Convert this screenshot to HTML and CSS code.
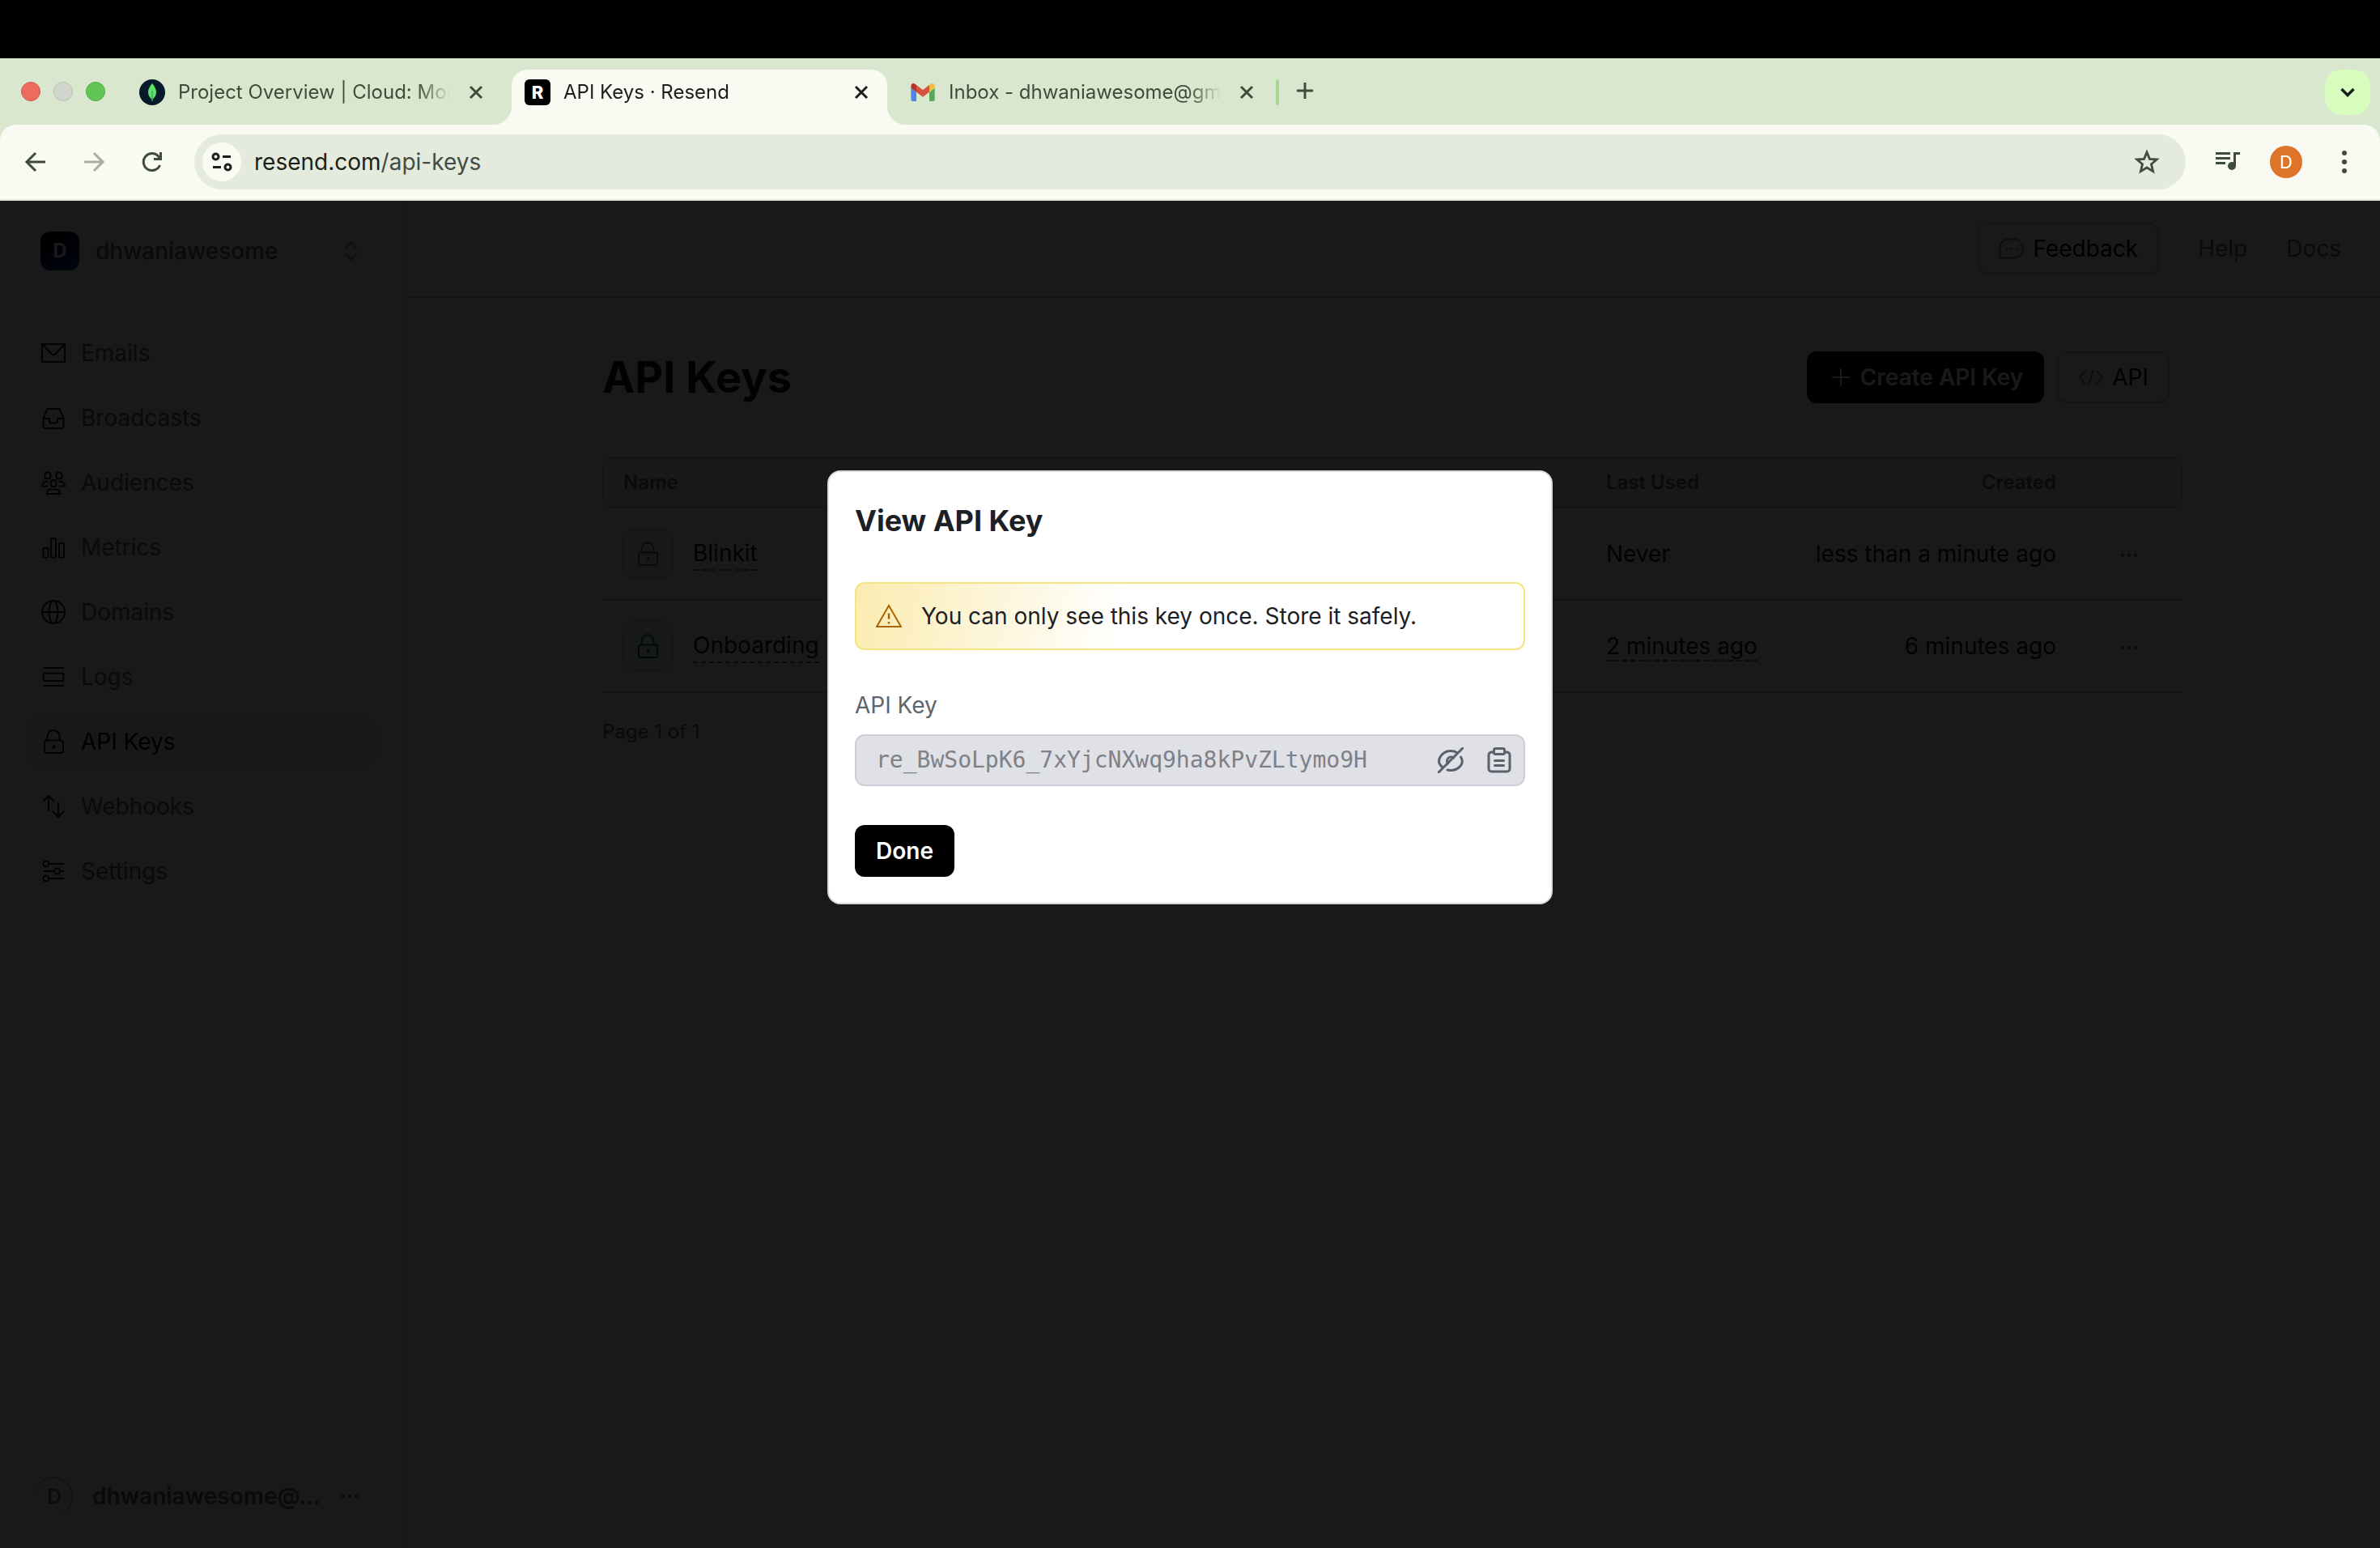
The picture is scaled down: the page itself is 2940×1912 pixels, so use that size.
FILE: index.html
```html
<!DOCTYPE html>
<html lang="en">
<head>
<meta charset="utf-8">
<title>API Keys · Resend</title>
<link rel="stylesheet" href="styles.css">
</head>
<body>
<svg class="sprite" aria-hidden="true">
  <symbol id="i-close" viewBox="0 0 32 32"><path d="M9 9l14 14M23 9L9 23" stroke-width="3"/></symbol>
  <symbol id="i-more" viewBox="0 0 32 32"><g fill="currentColor" stroke="none"><circle cx="8" cy="16" r="2"/><circle cx="16" cy="16" r="2"/><circle cx="24" cy="16" r="2"/></g></symbol>
  <symbol id="i-lock" viewBox="0 0 32 32"><path d="M8.500 14V9.500a7.500 7.500 0 0 1 15 0V14"/><rect x="5" y="14.500" width="23" height="15.500" rx="2.500"/><path d="M16.500 20.500v4" stroke-width="3"/></symbol>
</svg>

<div class="notch"></div>

<header class="browser">
  <div class="tabstrip">
    <div class="lights"><span class="light red"></span><span class="light grey"></span><span class="light green"></span></div>
    <div class="tabs">
      <div class="tab">
        <svg class="favicon" viewBox="0 0 32 32"><circle cx="16" cy="16" r="16" fill="#061a2b"/><path d="M16 5c3.500 4 5 7.500 5 11 0 4-2 6.500-4.500 8.500V27h-1v-2.500C13 22.500 11 20 11 16c0-3.500 1.500-7 5-11z" fill="#5fe06b"/><path d="M16 14v12" stroke="#1c9a4f" stroke-width="1"/></svg>
        <span class="tab-title">Project Overview | Cloud: Mon</span>
        <button class="tab-close" aria-label="Close tab"><svg class="icon"><use href="#i-close"/></svg></button>
      </div>
      <div class="tab active">
        <span class="favicon resend">R</span>
        <span class="tab-title">API Keys · Resend</span>
        <button class="tab-close" aria-label="Close tab"><svg class="icon"><use href="#i-close"/></svg></button>
      </div>
      <div class="tab">
        <svg class="favicon" viewBox="48 27 96 96"><path fill="#4f86ec" d="M58 108h14V74L52 59v43c0 3.320 2.690 6 6 6"/><path fill="#58a55c" d="M120 108h14c3.320 0 6-2.690 6-6V59l-20 15"/><path fill="#f2be42" d="M120 48v26l20-15v-8c0-7.420-8.470-11.650-14.400-7.200"/><path fill="#d95140" d="M72 74V48l24 18 24-18v26L96 92"/><path fill="#b63529" d="M52 51v8l20 15V48l-5.600-4.200c-5.940-4.450-14.400-.220-14.400 7.200"/></svg>
        <span class="tab-title">Inbox - dhwaniawesome@gma</span>
        <button class="tab-close" aria-label="Close tab"><svg class="icon"><use href="#i-close"/></svg></button>
      </div>
    </div>
    <span class="tab-divider"></span>
    <button class="new-tab" aria-label="New tab"><svg class="icon" viewBox="0 0 32 32"><path d="M16 6v20M6 16h20" stroke-width="3"/></svg></button>
    <button class="tab-search" aria-label="Search tabs"><svg class="icon" viewBox="0 0 32 32"><path d="M8.500 12l7.500 7.500 7.500-7.500" stroke-width="3.500"/></svg></button>
  </div>
  <div class="toolbar">
    <button class="tool" aria-label="Back"><svg class="icon" viewBox="0 0 32 32"><path d="M28 16H6M16 5L5 16l11 11" stroke-width="3"/></svg></button>
    <button class="tool off" aria-label="Forward"><svg class="icon" viewBox="0 0 32 32"><path d="M4 16h22M16 5l11 11-11 11" stroke-width="3"/></svg></button>
    <button class="tool reload" aria-label="Reload"><svg class="icon" viewBox="0 0 32 32"><path d="M25.500 20a10.500 10.500 0 1 1-1.500-10.500l2 2M26.500 4v8.500h-8.500" stroke-width="3"/></svg></button>
    <div class="omnibox">
      <button class="site-info" aria-label="Site information"><svg class="icon" viewBox="0 0 32 32"><g stroke-width="3"><circle cx="8.500" cy="9.500" r="3.500"/><path d="M17 9.500h10M5 22.500h10"/><circle cx="23.500" cy="22.500" r="3.500"/></g></svg></button>
      <div class="address"><label for="url">resend.com</label><input id="url" type="text" value="/api-keys"></div>
      <button class="tool star" aria-label="Bookmark"><svg class="icon" viewBox="0 0 32 32"><path d="M16 4l3.400 8.300 8.900.700-6.800 5.800 2.100 8.800L16 23l-7.600 4.600 2.100-8.800-6.800-5.800 8.900-.700z" stroke-width="2.800" stroke-linejoin="miter"/></svg></button>
    </div>
    <button class="tool media" aria-label="Media"><svg class="icon" viewBox="0 0 32 32"><path d="M1 5.500h18M1 11.500h18M1 17.500h12M24.500 21V5.500H31" stroke-width="3"/><circle cx="21" cy="21" r="5" fill="currentColor" stroke="none"/></svg></button>
    <button class="profile" aria-label="Profile">D</button>
    <button class="tool" aria-label="Menu"><svg class="icon" viewBox="0 0 32 32"><g fill="currentColor" stroke="none"><circle cx="16" cy="5" r="3"/><circle cx="16" cy="16" r="3"/><circle cx="16" cy="27" r="3"/></g></svg></button>
  </div>
</header>

<div class="page">
  <aside class="sidebar">
    <button class="team">
      <span class="team-logo">D</span><span class="team-name">dhwaniawesome</span>
      <svg class="icon muted" viewBox="0 0 32 32"><path d="M9 12.500l7-7 7 7M9 19.500l7 7 7-7"/></svg>
    </button>
    <nav class="nav">
      <a href="#emails"><svg class="icon" viewBox="0 0 32 32"><rect x="2" y="5" width="28" height="22"/><path d="M3 6l10.500 11c1.500 1.500 3.500 1.500 5 0L29 6"/></svg>Emails</a>
      <a href="#broadcasts"><svg class="icon" viewBox="0 0 32 32"><path d="M8.500 5h15L28.500 17v10a2 2 0 0 1-2 2h-21a2 2 0 0 1-2-2V17zM3.500 17H11v2.500a3 3 0 0 0 3 3h4a3 3 0 0 0 3-3V17h7.500"/></svg>Broadcasts</a>
      <a href="#audiences"><svg class="icon" viewBox="0 0 32 32"><rect x="5.500" y="3.500" width="7" height="8" rx="3"/><rect x="19.500" y="3.500" width="7" height="8" rx="3"/><rect x="12.500" y="13" width="7" height="8" rx="3"/><path d="M9.500 15H7c-3 0-5 2.500-5 5.500h7.500M22.500 15H25c3 0 5 2.500 5 5.500h-7.500M8 30c0-3 1.500-5.500 4-5.500h8c2.500 0 4 2.500 4 5.500z"/></svg>Audiences</a>
      <a href="#metrics"><svg class="icon" viewBox="0 0 32 32"><rect x="3.500" y="17" width="6" height="11.500" rx="1"/><rect x="13" y="5" width="6" height="23.500" rx="1"/><rect x="23" y="11" width="6" height="17.500" rx="1"/></svg>Metrics</a>
      <a href="#domains"><svg class="icon" viewBox="0 0 32 32"><circle cx="16" cy="16" r="14"/><ellipse cx="16" cy="16" rx="5.500" ry="14"/><path d="M2 16h28"/></svg>Domains</a>
      <a href="#logs"><svg class="icon" viewBox="0 0 32 32"><path d="M4 5h25M4 27h25"/><rect x="3.500" y="11.500" width="25" height="9.500" rx="2"/></svg>Logs</a>
      <a href="#api-keys" class="current"><svg class="icon"><use href="#i-lock"/></svg>API Keys</a>
      <a href="#webhooks"><svg class="icon" viewBox="0 0 32 32"><path d="M10 21.500V3M3 10l7-7 7 7M22 11v18M15 22l7 7 7-7"/></svg>Webhooks</a>
      <a href="#settings"><svg class="icon" viewBox="0 0 32 32"><circle cx="7" cy="7" r="3.500"/><circle cx="20.500" cy="16" r="3.500"/><circle cx="7" cy="25" r="3.500"/><path d="M11 7h18M4 16h12.500M24.500 16H29M11 25h18"/></svg>Settings</a>
    </nav>
    <button class="account">
      <span class="account-avatar">D</span><span class="account-name">dhwaniawesome@...</span>
      <svg class="icon"><use href="#i-more"/></svg>
    </button>
  </aside>

  <main class="main">
    <div class="topbar">
      <button class="btn outline"><svg class="icon muted" viewBox="0 0 32 32"><path d="M1.500 27.500V16C1.500 8 6 4.500 12 4.500h7c6 0 11 4.500 11 11.500s-5 11.500-11 11.500z"/><g fill="currentColor" stroke="none"><circle cx="10" cy="16" r="1.500"/><circle cx="16" cy="16" r="1.500"/><circle cx="22" cy="16" r="1.500"/></g></svg>Feedback</button>
      <a href="#help">Help</a>
      <a href="#docs">Docs</a>
    </div>
    <div class="content">
      <div class="heading">
        <h1>API Keys</h1>
        <button class="btn solid"><svg class="icon" viewBox="0 0 32 32"><path d="M16 5v22M5 16h22"/></svg>Create API Key</button>
        <button class="btn outline"><svg class="icon muted" viewBox="0 0 32 32"><path d="M9 8l-7 8 7 8M23 8l7 8-7 8M18.500 7.500l-5 17"/></svg>API</button>
      </div>
      <table>
        <colgroup><col><col class="col-used"><col class="col-created"><col class="col-menu"></colgroup>
        <thead><tr><th>Name</th><th>Last Used</th><th class="end">Created</th><th></th></tr></thead>
        <tbody>
          <tr>
            <td><div class="key"><span class="key-icon"><svg class="icon"><use href="#i-lock"/></svg></span><a href="#blinkit" class="dashed">Blinkit</a></div></td>
            <td>Never</td><td class="end">less than a minute ago</td>
            <td class="menu"><button aria-label="More actions"><svg class="icon"><use href="#i-more"/></svg></button></td>
          </tr>
          <tr>
            <td><div class="key"><span class="key-icon green-key"><svg class="icon"><use href="#i-lock"/></svg></span><a href="#onboarding" class="dashed">Onboarding</a></div></td>
            <td><span class="dashed">2 minutes ago</span></td><td class="end">6 minutes ago</td>
            <td class="menu"><button aria-label="More actions"><svg class="icon"><use href="#i-more"/></svg></button></td>
          </tr>
        </tbody>
      </table>
      <p class="pager">Page 1 of 1</p>
    </div>
  </main>

  <div class="overlay">
    <section class="dialog" role="dialog" aria-labelledby="dialog-title">
      <h2 id="dialog-title">View API Key</h2>
      <div class="alert">
        <svg class="icon" viewBox="0 0 32 32"><path d="M16 3L31 29H1z"/><path d="M16 12.500v7M16 23v2.500" stroke-width="2.500"/></svg>
        <span>You can only see this key once. Store it safely.</span>
      </div>
      <div class="field">
        <label for="key">API Key</label>
        <div class="key-box">
          <input id="key" type="text" readonly value="re_BwSoLpK6_7xYjcNXwq9ha8kPvZLtymo9H">
          <button aria-label="Hide key"><svg class="icon" viewBox="0 0 32 32"><g stroke-width="3"><path d="M1 31L31 1"/><path d="M6 25C3.500 22.500 1.500 19.500 1.500 17.500 1.500 11 8 4.500 16 4.500c3 0 5.500.700 8 2"/><path d="M28.500 12c1.200 2 1.800 4 1.800 5 0 6-6.500 11.500-14.300 11.500-1.500 0-2.500-.200-4-.500"/><path d="M12.500 20a5 5 0 0 1 7-7"/></g></svg></button>
          <button aria-label="Copy key"><svg class="icon" viewBox="0 0 32 32"><g stroke-width="3"><path d="M9 6H6.500a3.500 3.500 0 0 0-3.500 3.500v17a3.500 3.500 0 0 0 3.500 3.500h19a3.500 3.500 0 0 0 3.500-3.500v-17A3.500 3.500 0 0 0 25.500 6H23"/><rect x="9.500" y="1.500" width="13" height="7" rx="2"/><path d="M10.500 16.500h11M10.500 22.500h11"/></g></svg></button>
        </div>
      </div>
      <button class="btn solid">Done</button>
    </section>
  </div>
</div>
</body>
</html>
```
FILE: styles.css
```css
* { box-sizing: border-box; }

body {
  margin: 0;
  min-height: 100vh;
  display: flex;
  flex-direction: column;
  background: #000;
  color: #11181c;
  font: 28px/40px Inter, "Liberation Sans", sans-serif;
}

button {
  margin: 0;
  padding: 0;
  border: 0;
  background: none;
  color: inherit;
  font: inherit;
}

input {
  min-width: 0;
  padding: 0;
  border: 0;
  outline: 0;
  background: none;
  color: inherit;
  font: inherit;
}

a { color: inherit; text-decoration: none; }

.sprite { display: none; }

.icon {
  display: block;
  flex: none;
  width: 32px;
  height: 32px;
  fill: none;
  stroke: currentColor;
  stroke-width: 2;
}

/* Browser chrome */
.notch { height: 72px; background: #000; }

.browser { background: #dae7cf; color: #3f4c3a; }

.tabstrip {
  display: flex;
  align-items: flex-start;
  height: 82px;
  padding: 14px 12px 0 26px;
}

.lights { display: flex; gap: 16px; width: 130px; padding-top: 15px; }
.light { width: 24px; height: 24px; border-radius: 50%; border: 1px solid; }
.light.red { background: #ec6a5e; border-color: #d5564b; }
.light.grey { background: #d1d5cb; border-color: #b9beb3; }
.light.green { background: #61c554; border-color: #4fa944; }

.tabs { display: flex; gap: 12px; }

.tab {
  display: flex;
  align-items: center;
  gap: 16px;
  width: 464px;
  height: 68px;
  padding: 0 16px 12px;
  font-size: 24px;
  line-height: 32px;
}

.tab.active {
  position: relative;
  background: #f9faf2;
  color: #1b1f19;
  border-radius: 20px 20px 0 0;
}

.tab.active::before,
.tab.active::after {
  content: "";
  position: absolute;
  bottom: 0;
  width: 24px;
  height: 24px;
}
.tab.active::before { right: 100%; background: radial-gradient(circle at 0 0, transparent 24px, #f9faf2 25px); }
.tab.active::after { left: 100%; background: radial-gradient(circle at 100% 0, transparent 24px, #f9faf2 25px); }

.favicon { flex: none; width: 32px; height: 32px; }

.resend {
  border-radius: 6px;
  background: #000;
  color: #fff;
  font-size: 22px;
  font-weight: 800;
  text-align: center;
}

.tab-title {
  flex: 1;
  overflow: hidden;
  white-space: nowrap;
  mask-image: linear-gradient(90deg, #000 calc(100% - 40px), transparent);
}

.tab-close { flex: none; }

.tab-divider {
  width: 4px;
  height: 32px;
  margin: 12px 16px 0 4px;
  border-radius: 2px;
  background: #a8d596;
}

.new-tab { padding-top: 10px; }

.tab-search {
  display: grid;
  place-items: center;
  width: 56px;
  height: 56px;
  margin-left: auto;
  border-radius: 20px;
  background: #d6fcbe;
  color: #1b1f19;
}

.toolbar {
  display: flex;
  align-items: center;
  height: 94px;
  padding: 0 28px;
  border-bottom: 2px solid #e0e4d8;
  border-radius: 20px 20px 0 0;
  background: #f9faf2;
}

.tool { flex: none; margin-right: 40px; }
.tool:last-child { margin-right: 0; }
.tool.off { color: #a9ada4; }
.tool.reload, .tool.media { margin-right: 36px; }

.omnibox {
  flex: 1;
  display: flex;
  align-items: center;
  height: 68px;
  padding: 0 32px 0 10px;
  margin-right: 36px;
  border-radius: 34px;
  background: #e4eadc;
}

.site-info {
  display: grid;
  place-items: center;
  width: 48px;
  height: 48px;
  margin-right: 16px;
  border-radius: 50%;
  background: #f9faf2;
  color: #1b1f19;
}

.address { flex: 1; display: flex; color: #454a42; }
.address label { color: #1b1f19; }
.address input { flex: 1; }

.tool.star { margin-right: 0; color: #454a42; }

.profile {
  width: 40px;
  height: 40px;
  margin-right: 36px;
  border-radius: 50%;
  background: #de732c;
  color: #fff;
  font-size: 22px;
}

/* Application */
.page { position: relative; flex: 1; display: flex; background: #fff; }

.sidebar {
  display: flex;
  flex-direction: column;
  width: 500px;
  padding: 38px 32px 40px;
  border-right: 2px solid #e0e1e6;
}

.team, .account { display: flex; align-items: center; text-align: left; color: #60646c; }
.team { padding: 0 16px 0 18px; font-weight: 500; }
.team-name { flex: 1; padding-left: 20px; }

.team-logo {
  width: 48px;
  height: 48px;
  border-radius: 12px;
  background: linear-gradient(150deg, #06061e 30%, #0038a8);
  color: #fff;
  font-size: 24px;
  font-weight: 700;
  line-height: 48px;
  text-align: center;
}

.muted { color: #80838d; }

.nav { display: flex; flex-direction: column; gap: 16px; margin-top: 70px; }

.nav a {
  display: flex;
  align-items: center;
  gap: 18px;
  height: 64px;
  padding: 0 18px;
  border-radius: 16px;
  color: #60646c;
}
.nav .icon { color: #11181c; }
.nav .current { background: #f0f0f3; color: #000; }

.account { margin-top: auto; padding: 0 18px 0 10px; }
.account-name { flex: 1; padding-left: 24px; font-weight: 600; }

.account-avatar {
  width: 48px;
  height: 48px;
  border-radius: 50%;
  border-top: 2px solid #b9bbc6;
  border-right: 2px solid #b9bbc6;
  padding-left: 4px;
  font-size: 24px;
  font-weight: 500;
  line-height: 46px;
  text-align: center;
}

.main { flex: 1; min-width: 0; }

.topbar {
  display: flex;
  align-items: center;
  justify-content: flex-end;
  gap: 48px;
  height: 120px;
  padding: 0 48px;
  border-bottom: 2px solid #cdced6;
  color: #60646c;
}

.btn {
  display: flex;
  align-items: center;
  gap: 10px;
  height: 64px;
  padding: 0 24px;
  border: 2px solid transparent;
  border-radius: 12px;
}
.btn.outline { border-color: #cdced6; color: #000; }
.btn.solid { gap: 8px; background: #000; color: #fff; font-weight: 600; }

.content { max-width: 1952px; margin: 0 auto; padding-top: 66px; }

.heading { display: flex; align-items: center; gap: 16px; padding-right: 16px; margin-bottom: 66px; }

h1 { flex: 1; margin: 0; font-size: 54px; line-height: 64px; font-weight: 700; }

table { width: 100%; table-layout: fixed; border-collapse: separate; border-spacing: 0; }
.col-used { width: 240px; }
.col-created { width: 364px; }
.col-menu { width: 132px; }

th {
  height: 64px;
  padding: 0 24px;
  border: 2px solid #cdced6;
  border-width: 2px 0;
  background: #f0f0f3;
  color: #60646c;
  font-size: 24px;
  font-weight: 600;
  line-height: 32px;
  text-align: left;
}
th:first-child { border-left-width: 2px; border-radius: 12px 0 0 12px; }
th:last-child { border-right-width: 2px; border-radius: 0 12px 12px 0; }

td { height: 114px; padding: 0 24px; border-bottom: 2px solid #cdced6; white-space: nowrap; }
th.end, td.end { text-align: right; }

.key { display: flex; align-items: center; gap: 24px; }

.key-icon {
  display: grid;
  place-items: center;
  width: 64px;
  height: 64px;
  border: 4px solid #e0e1e6;
  border-radius: 16px;
  background: #f0f0f3;
  color: #60646c;
}
.key-icon.green-key { color: #1d6048; background: #e6f2ee; }

.dashed { border-bottom: 2px dashed #60646c; }

.menu { text-align: center; }
.menu button { vertical-align: middle; color: #60646c; }

.pager { margin: 32px 0 0; color: #60646c; font-size: 24px; line-height: 32px; }

/* Modal */
.overlay {
  position: absolute;
  inset: 0;
  display: flex;
  align-items: flex-start;
  justify-content: center;
  padding: 333px 32px 32px;
  background: rgba(0, 0, 0, 0.9);
}

.dialog {
  display: flex;
  flex-direction: column;
  align-items: flex-start;
  gap: 48px;
  width: 100%;
  max-width: 896px;
  padding: 32px;
  border: 2px solid #d9d9e0;
  border-radius: 16px;
  background: #fff;
}

h2 { margin: 0; font-size: 36px; line-height: 56px; font-weight: 700; color: #1c2024; }

.alert {
  display: flex;
  align-items: center;
  gap: 24px;
  width: 100%;
  height: 84px;
  padding: 0 24px;
  border: 2px solid #f6e481;
  border-radius: 12px;
  background: linear-gradient(100deg, #fbecb0, #fdf6dc 22%, #fff 40%);
  color: #1c2024;
}
.alert .icon { color: #ab6400; }

.field { display: flex; flex-direction: column; gap: 16px; width: 100%; }
.field label { color: #60646c; }

.key-box {
  display: flex;
  align-items: center;
  gap: 28px;
  height: 64px;
  padding: 0 14px 0 24px;
  border: 2px solid #cdced6;
  border-radius: 12px;
  background: #e0e1e6;
  color: #5b606a;
}
.key-box input { flex: 1; font-family: "DejaVu Sans Mono", monospace; color: #7e808a; }
.key-box .icon { stroke-linecap: round; }
```
